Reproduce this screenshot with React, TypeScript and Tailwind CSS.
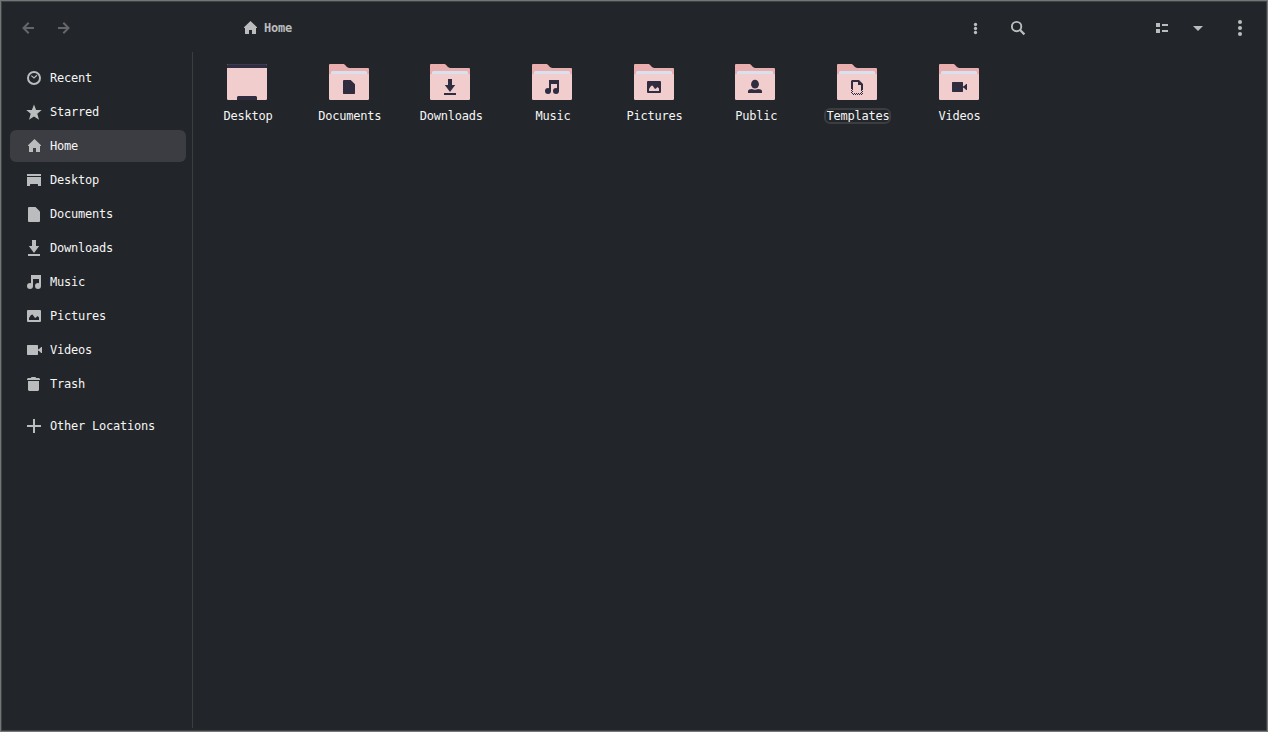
import React from "react";

type IconProps = { className?: string };

const Svg = ({ className = "", children }: React.PropsWithChildren<IconProps>) => (
  <svg viewBox="0 0 16 16" width="16" height="16" fill="currentColor" className={`block shrink-0 ${className}`}>
    {children}
  </svg>
);

const RecentIcon = (p: IconProps) => (
  <Svg {...p}>
    <circle cx="8" cy="8" r="6" fill="none" stroke="currentColor" strokeWidth="2" />
    <path d="M5.3 5.6 8 7.9l2.9-2.6" fill="none" stroke="currentColor" strokeWidth="1.2" />
  </Svg>
);
const StarIcon = (p: IconProps) => (
  <Svg {...p}>
    <path d="M8 .4 10.100 6l5.600.1-4.400 3.700 1.700 6L8 12.600l-5 3.200 1.700-6L.3 6.100 5.900 6z" />
  </Svg>
);
const HomeIcon = (p: IconProps) => (
  <Svg {...p}>
    <path d="M8.5 1 2 7.2V8h1v6h4v-4h3v4h4V8h1v-.8z" />
  </Svg>
);
const DesktopIcon = (p: IconProps) => (
  <Svg {...p}>
    <path d="M1 2h14v2H1zM1 5h14v9h-3v-1.5l-.5-.5h-7l-.5.5V14H1z" />
  </Svg>
);
const DocumentIcon = (p: IconProps) => (
  <Svg {...p}>
    <path d="M3 1h6.5L14 5.5V15a1 1 0 0 1-1 1H3a1 1 0 0 1-1-1V2a1 1 0 0 1 1-1z" />
  </Svg>
);
const DocumentSmallIcon = (p: IconProps) => (
  <Svg {...p}>
    <path d="M2.5 1h7.2L14 5.3v9.2l-.5.5h-11l-.5-.5v-13z" />
  </Svg>
);
const DownloadIcon = (p: IconProps) => (
  <Svg {...p}>
    <path d="M6 0h4v6h3.2L8 12.9 2.8 6H6zM2 14h12v2H2z" />
  </Svg>
);
const MusicIcon = (p: IconProps) => (
  <Svg {...p}>
    <path d="M5 1h10v11h-2V5H7v7H5z" />
    <circle cx="4" cy="12" r="3" />
    <circle cx="12" cy="12" r="3" />
  </Svg>
);
const PictureIcon = (p: IconProps) => (
  <Svg {...p}>
    <path
      fillRule="evenodd"
      d="M2 2h12a1 1 0 0 1 1 1v10a1 1 0 0 1-1 1H2a1 1 0 0 1-1-1V3a1 1 0 0 1 1-1zM3 12h10V9.500L11.5 8 10 9.500 9 10 6.5 6.5 5 7 3 10z"
    />
  </Svg>
);
const VideoIcon = (p: IconProps) => (
  <Svg {...p}>
    <path d="M1.500 3h10l.5.5v3.700h.8L15.200 5h.8v6h-.8L12.800 8.800H12v3.700l-.5.5h-10l-.5-.5v-9z" />
  </Svg>
);
const TrashIcon = (p: IconProps) => (
  <Svg {...p}>
    <path d="M5.5 1h4l.7 1H13l1 1v1H1V3l1-1h2.8zM2 5h11v9l-1 1H3l-1-1z" />
  </Svg>
);
const PlusIcon = (p: IconProps) => (
  <Svg {...p}>
    <path d="M7 1h2v6h6v2H9v6H7V9H1V7h6z" />
  </Svg>
);
const PublicIcon = (p: IconProps) => (
  <Svg {...p}>
    <ellipse cx="8" cy="5.200" rx="3.900" ry="4.400" />
    <path d="M1 14v-2C1 10.700 3 10 5 9.900c1.500 1 4.500 1 6 0 2 .1 4 .8 4 2.100v2z" />
  </Svg>
);
const TemplateIcon = (p: IconProps) => (
  <Svg {...p}>
    <path d="M3 1h7l4 4v6h-2V6H9V3H4v7H2V2z" />
    <path d="M3 10h1v1H3zM2 11h1v1H2zM3 12h1v1H3zM2 13h1v1H2zM3 14h1v1H3zM4 15h1v1H4zM6 15h1v1H6zM8 15h1v1H8zM10 15h1v1h-1zM12 15h1v1h-1zM5 14h1v1H5zM7 14h1v1H7zM9 14h1v1H9zM11 14h1v1h-1zM13 14h1v1h-1zM12 13h1v1h-1zM13 12h1v1h-1zM12 11h1v1h-1z" />
  </Svg>
);

const ArrowLeft = (p: IconProps) => (
  <Svg {...p}>
    <path d="M14 8H4M8.700 2.800 3.500 8l5.200 5.200" fill="none" stroke="currentColor" strokeWidth="2" />
  </Svg>
);
const SearchIcon = (p: IconProps) => (
  <Svg {...p}>
    <circle cx="6.600" cy="6.600" r="4.700" fill="none" stroke="currentColor" strokeWidth="1.900" />
    <path d="M9.800 9.800 14.400 14.400" stroke="currentColor" strokeWidth="2.200" />
  </Svg>
);
const ListIcon = (p: IconProps) => (
  <Svg {...p}>
    <path d="M2 3h4v4H2zM2 9h4v4H2zM8 4h6v2H8zM8 10h6v2H8z" />
  </Svg>
);
const CaretIcon = (p: IconProps) => (
  <Svg {...p}>
    <path d="M3 6h10L8 11z" />
  </Svg>
);
const MenuIcon = (p: IconProps) => (
  <Svg {...p}>
    <circle cx="8" cy="2" r="2.050" />
    <circle cx="8" cy="8" r="2.050" />
    <circle cx="8" cy="14" r="2.050" />
  </Svg>
);
const SmallMenuIcon = (p: IconProps) => (
  <Svg {...p}>
    <circle cx="8.500" cy="4.500" r="1.650" />
    <circle cx="8.500" cy="8.500" r="1.650" />
    <circle cx="8.500" cy="12.500" r="1.650" />
  </Svg>
);

const DesktopFolder = () => (
  <svg viewBox="0 0 40 36" width="40" height="36" className="block">
    <rect width="40" height="36" rx="1.200" fill="#f2cdcd" />
    <path d="M0 4V1.200Q0 0 1.200 0h37.600Q40 0 40 1.200V4z" fill="#302d41" />
    <path d="M1 .5h38" stroke="#3d3a50" />
    <path d="M10 36v-3l1-1h18l1 1v3z" fill="#302d41" />
  </svg>
);

const Folder = ({ icon: Icon }: { icon: React.FC<IconProps> }) => (
  <div className="grid h-9 w-10 place-items-center">
    <svg viewBox="0 0 40 36" width="40" height="36" className="col-start-1 row-start-1 block">
      <path d="M1 0h13.200c1 0 1.600.6 2.200 1.300C17.800 3 18.800 4 20.500 4H39q1 0 1 1v8H0V1q0-1 1-1z" fill="#ebaeae" />
      <path d="M2 12V8.500Q2 7 3.500 7h33Q38 7 38 8.500V12z" fill="#d9e0ee" />
      <path d="M0 11q0-1 1-1h38q1 0 1 1v23.800q0 1.200-1.200 1.200H1.200Q0 36 0 34.800z" fill="#f2cdcd" />
    </svg>
    <Icon className="col-start-1 row-start-1 mt-[10px] text-[#302d41]" />
  </div>
);

const places: { name: string; icon: React.FC<IconProps> }[] = [
  { name: "Recent", icon: RecentIcon },
  { name: "Starred", icon: StarIcon },
  { name: "Home", icon: HomeIcon },
  { name: "Desktop", icon: DesktopIcon },
  { name: "Documents", icon: DocumentIcon },
  { name: "Downloads", icon: DownloadIcon },
  { name: "Music", icon: MusicIcon },
  { name: "Pictures", icon: PictureIcon },
  { name: "Videos", icon: VideoIcon },
  { name: "Trash", icon: TrashIcon },
];

const folders: { name: string; icon?: React.FC<IconProps> }[] = [
  { name: "Desktop" },
  { name: "Documents", icon: DocumentSmallIcon },
  { name: "Downloads", icon: DownloadIcon },
  { name: "Music", icon: MusicIcon },
  { name: "Pictures", icon: PictureIcon },
  { name: "Public", icon: PublicIcon },
  { name: "Templates", icon: TemplateIcon },
  { name: "Videos", icon: VideoIcon },
];

const Place = ({ name, icon: Icon, active }: { name: string; icon: React.FC<IconProps>; active?: boolean }) => (
  <li className={`flex h-8 items-center gap-2 rounded-md pl-4 ${active ? "bg-[#3b3d42]" : ""}`}>
    <Icon className="text-[#bbbcbd]" />
    <span>{name}</span>
  </li>
);

export default function App() {
  return (
    <div className="h-[732px] w-[1268px] border border-[#757575] bg-[#222529] font-['DejaVu_Sans_Mono',monospace] text-[12px] leading-4 tracking-[-0.224px] text-[#f5f5f5]">
      <div className="flex h-full flex-col border border-[#3c4246]">
        <header className="flex h-[50px] shrink-0 items-center pt-[2px] text-[#bbbcbd]">
          <button className="ml-[18px] text-[#64666a]" aria-label="Back">
            <ArrowLeft />
          </button>
          <button className="ml-5 text-[#64666a]" aria-label="Forward">
            <ArrowLeft className="-scale-x-100" />
          </button>
          <div className="ml-[170px] flex items-center gap-1.5">
            <HomeIcon />
            <span className="font-bold">Home</span>
          </div>
          <div className="ml-auto flex items-center">
            <SmallMenuIcon className="mr-[27px]" />
            <SearchIcon className="mr-[128px]" />
            <ListIcon className="mr-5" />
            <CaretIcon className="mr-[26px]" />
            <MenuIcon className="mr-[18px] overflow-visible" />
          </div>
        </header>
        <div className="flex min-h-0 flex-1">
          <nav className="mb-[2px] w-[191px] shrink-0 border-r border-[#3b3d41] pt-[10px] pr-[6px] pl-2">
            <ul className="flex flex-col gap-0.5">
              {places.map((p) => (
                <Place key={p.name} {...p} active={p.name === "Home"} />
              ))}
            </ul>
            <ul className="mt-[10px]">
              <Place name="Other Locations" icon={PlusIcon} />
            </ul>
          </nav>
          <main className="grid auto-rows-min grid-cols-[repeat(8,101.67px)] pt-3 pl-[3.17px]">
            {folders.map(({ name, icon }) => (
              <div key={name} className="flex flex-col items-center">
                {icon ? <Folder icon={icon} /> : <DesktopFolder />}
                <span
                  className={`mt-2 ml-[2px] rounded-md ${
                    name === "Templates" ? "px-0.5 outline-2 -outline-offset-2 outline-[#3b3d41]" : ""
                  }`}
                >
                  {name}
                </span>
              </div>
            ))}
          </main>
        </div>
      </div>
    </div>
  );
}
